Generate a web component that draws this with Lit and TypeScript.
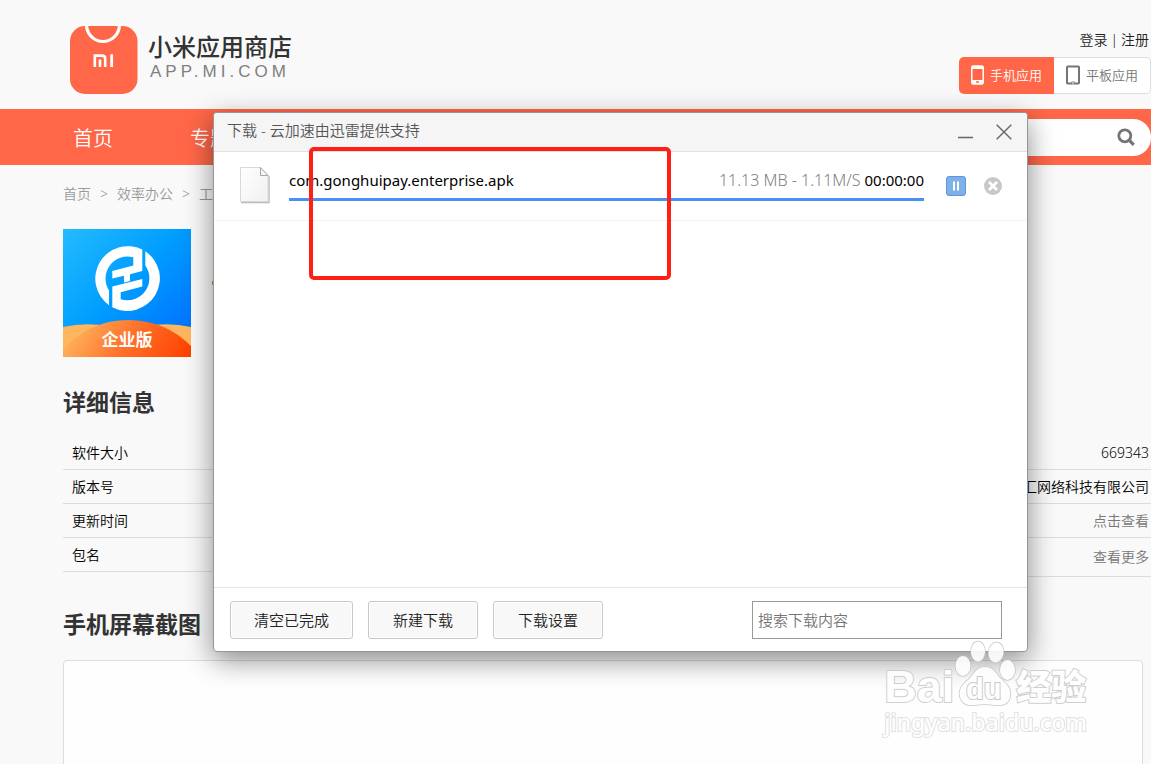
import { LitElement, html, css, svg } from "lit";
import { customElement, property } from "lit/decorators.js";

interface InfoRow {
  label: string;
  kind?: "link";
}

@customElement("store-header")
class StoreHeader extends LitElement {
  static styles = css`
    :host { display: block; }
    a { color: inherit; text-decoration: none; }
    .top {
      display: flex;
      justify-content: space-between;
      height: 109px;
      box-sizing: border-box;
      padding: 26px 0 0 70px;
    }
    .brand { display: flex; align-items: flex-start; gap: 10px; }
    .brand svg { display: block; }
    .names { display: flex; flex-direction: column; padding-top: 5px; }
    .name { font-size: 24px; line-height: 32px; font-weight: 500; color: #333; }
    .domain {
      font: 17px/18px "Liberation Sans", sans-serif;
      letter-spacing: 4px;
      color: #808080;
      padding-left: 2px;
    }
    .account {
      display: flex;
      flex-direction: column;
      align-items: flex-end;
      gap: 7px;
      padding-top: 4px;
    }
    .login { display: flex; gap: 3px; font-size: 14px; line-height: 20px; padding-right: 2px; color: #222; }
    .tabs { display: flex; }
    .tab {
      display: flex;
      align-items: center;
      gap: 6px;
      height: 37px;
      box-sizing: border-box;
      padding: 0 12px 2px;
      border: 1px solid #ddd;
      border-left: 0;
      border-radius: 0 5px 5px 0;
      background: #fff;
      color: #757575;
      font: inherit;
      font-size: 13px;
      line-height: 20px;
    }
    .tab.on {
      border: 0;
      border-radius: 5px 0 0 5px;
      background: #ff6748;
      color: #fff;
    }
    .nav {
      display: flex;
      align-items: center;
      justify-content: space-between;
      height: 56px;
      background: #ff6748;
    }
    .links { display: flex; gap: 77px; padding: 3px 0 0 73px; color: #fff; font-size: 20px; line-height: 30px; }
    .search {
      display: flex;
      align-items: center;
      width: 300px;
      height: 37px;
      border-radius: 18px;
      background: #fff;
    }
    .search input {
      flex: 1;
      min-width: 0;
      border: 0;
      outline: 0;
      padding: 0 18px;
      background: transparent;
      font: inherit;
      font-size: 14px;
    }
    .search button { display: flex; border: 0; padding: 0; margin-right: 16px; background: none; }
  `;

  render() {
    return html`
      <header class="top">
        <a class="brand" href="#">
          <svg width="68" height="68" viewBox="0 0 68 68" aria-hidden="true">
            <rect width="67.500" height="68" rx="15" fill="#ff6748" />
            <path d="M16.500 0C17.500 9 24.500 15.500 33 15.500S48.500 9 49.500 0" fill="none" stroke="#fff" stroke-width="3.200" />
            <path d="M24.800 41V29.600h7.200q3.200 0 3.200 3.200V41M30 33.500V41" fill="none" stroke="#fff" stroke-width="2.600" />
            <path d="M41.700 28.300V41" stroke="#fff" stroke-width="2.800" />
          </svg>
          <span class="names">
            <span class="name">小米应用商店</span>
            <span class="domain">APP.MI.COM</span>
          </span>
        </a>
        <div class="account">
          <div class="login"><a href="#">登录</a><span>|</span><a href="#">注册</a></div>
          <div class="tabs">
            <button class="tab on">
              <svg width="13" height="20" viewBox="0 0 13 20" aria-hidden="true">
                <rect x=".8" y="1" width="11.400" height="18" rx="1.500" fill="none" stroke="#fff" stroke-width="1.500" />
                <path d="M1 1h11v3H1zM1 15h11v4H1z" fill="#fff" />
                <path d="M5 17h3" stroke="#ff6748" stroke-width="1.500" />
              </svg>手机应用
            </button>
            <button class="tab">
              <svg width="14" height="20" viewBox="0 0 14 20" aria-hidden="true">
                <rect x="1" y="1.500" width="12" height="17" rx=".8" fill="none" stroke="#757575" stroke-width="2" />
                <path d="M5.500 17.500h3" stroke="#757575" stroke-width="2" />
                <path d="M6 18h2" stroke="#fff" stroke-width="1" />
              </svg>平板应用
            </button>
          </div>
        </div>
      </header>
      <nav class="nav">
        <div class="links"><a href="#">首页</a><a href="#">专题</a></div>
        <form class="search" role="search">
          <input type="search" aria-label="搜索应用" />
          <button type="button" aria-label="搜索">
            <svg width="18" height="18" viewBox="0 0 18 18" aria-hidden="true">
              <circle cx="7.800" cy="7.800" r="6" fill="none" stroke="#757575" stroke-width="2.800" />
              <path d="M12 12l4.800 4.800" stroke="#757575" stroke-width="3.200" />
            </svg>
          </button>
        </form>
      </nav>
    `;
  }
}

@customElement("info-list")
class InfoList extends LitElement {
  @property({ attribute: false }) rows: InfoRow[] = [];
  @property() align = "left";

  static styles = css`
    :host { display: block; flex: 1; }
    .list { margin: 0; padding: 0; list-style: none; }
    .row {
      padding: 7px 9px 6px;
      border-bottom: 1px solid #ddd;
      font-size: 14px;
      line-height: 20px;
      color: #000;
    }
    .right .row { padding: 7px 2px 6px; text-align: right; }
    .right .row:last-child { padding: 9px 2px; }
    a { color: #777; text-decoration: none; }
  `;

  render() {
    return html`<ul class="list ${this.align}">
      ${this.rows.map((r) => html`<li class="row">${r.kind === "link" ? html`<a href="#">${r.label}</a>` : r.label}</li>`)}
    </ul>`;
  }
}

@customElement("download-window")
class DownloadWindow extends LitElement {
  static styles = css`
    :host {
      display: flex;
      flex-direction: column;
      box-sizing: border-box;
      border: 1px solid #94979a;
      border-radius: 4px;
      background: #fff;
      box-shadow: 0 8px 28px rgba(0, 0, 0, 0.45);
      font-size: 15px;
      line-height: 22px;
      overflow: hidden;
    }
    .bar {
      display: flex;
      align-items: center;
      justify-content: space-between;
      height: 39px;
      box-sizing: border-box;
      padding: 0 15px 4px 13px;
      border-bottom: 1px solid #e0e0e0;
      background: #f5f5f5;
      color: #555;
    }
    .controls { display: flex; gap: 22px; padding-top: 4px; }
    .icon { display: flex; border: 0; padding: 0; background: none; }
    .body { flex: 1; }
    .item {
      display: flex;
      align-items: center;
      height: 68px;
      padding: 0 25px;
      border-bottom: 1px solid #f3f3f3;
    }
    .item > svg { margin-bottom: 2px; }
    .main { flex: 1; margin: 0 22px 2px 18px; border-bottom: 3px solid #4a90f3; padding-bottom: 7px; }
    .line { display: flex; justify-content: space-between; color: #000; font-weight: 400; }
    .line .size { color: #808080; font-size: 16px; font-weight: 350; }
    .actions { display: flex; align-items: center; gap: 18px; }
    .foot {
      display: flex;
      align-items: center;
      gap: 15px;
      height: 64px;
      box-sizing: border-box;
      padding: 0 25px 0 16px;
      border-top: 1px solid #e5e5e5;
    }
    .btn {
      height: 38px;
      min-width: 110px;
      padding: 0 23px;
      border: 1px solid #c8c8c8;
      border-radius: 3px;
      background: #f8f8f8;
      box-shadow: inset 0 0 0 1px #fff;
      font: inherit;
      color: #222;
    }
    .find {
      width: 250px;
      height: 38px;
      box-sizing: border-box;
      margin-left: auto;
      padding: 0 5px;
      border: 1px solid #999;
      background: #fff;
      font: inherit;
    }
    .find::placeholder { color: #757575; }
  `;

  render() {
    return html`
      <div class="bar">
        <span>下载 - 云加速由迅雷提供支持</span>
        <span class="controls">
          <button class="icon" aria-label="最小化">
            <svg width="17" height="16" viewBox="0 0 17 16"><path d="M1 13.500h15" stroke="#666" stroke-width="1.500" /></svg>
          </button>
          <button class="icon" aria-label="关闭">
            <svg width="16" height="16" viewBox="0 0 16 16"><path d="M.7.700l14.600 14.600M15.300.700L.700 15.300" stroke="#666" stroke-width="1.400" /></svg>
          </button>
        </span>
      </div>
      <div class="body">
        <div class="item">
          <svg width="32" height="38" viewBox="0 0 32 38" aria-hidden="true">
            <defs>
              <linearGradient id="sheet" x1="0" y1="0" x2="1" y2="1">
                <stop offset="0" stop-color="#fff" /><stop offset="1" stop-color="#f0f0f0" />
              </linearGradient>
            </defs>
            <path d="M2 36.500h28V10" fill="none" stroke="#bdbdbd" stroke-width="1.500" />
            <path d="M1.500 1.500h20l7.500 8V35.500h-27.500z" fill="url(#sheet)" stroke="#d8d8d8" />
            <path d="M21.500 1.500v8h7.500z" fill="#f4f4f4" stroke="#a8a8a8" />
          </svg>
          <div class="main">
            <div class="line">
              <span>com.gonghuipay.enterprise.apk</span>
              <span><span class="size">11.13 MB - 1.11M/S</span> 00:00:00</span>
            </div>
          </div>
          <span class="actions">
            <button class="icon" aria-label="暂停">
              <svg width="20" height="20" viewBox="0 0 20 20">
                <rect x=".5" y=".5" width="19" height="19" rx="2.500" fill="#7eb0ea" stroke="#5f96d8" />
                <path d="M8 5.500v9M12 5.500v9" stroke="#fff" stroke-width="2" />
              </svg>
            </button>
            <button class="icon" aria-label="取消">
              <svg width="18" height="18" viewBox="0 0 18 18">
                <circle cx="9" cy="9" r="9" fill="#c8c8c8" />
                <path d="M5 5l8 8M13 5l-8 8" stroke="#fff" stroke-width="2.800" />
              </svg>
            </button>
          </span>
        </div>
      </div>
      <div class="foot">
        <button class="btn">清空已完成</button>
        <button class="btn">新建下载</button>
        <button class="btn">下载设置</button>
        <input class="find" type="text" placeholder="搜索下载内容" aria-label="搜索下载内容" />
      </div>
    `;
  }
}

@customElement("baidu-mark")
class BaiduMark extends LitElement {
  static styles = css`
    :host {
      display: block;
      color: #fff;
      font-family: "Noto Sans", "Noto Sans CJK SC", sans-serif;
      -webkit-text-stroke: 2px #cacaca;
      paint-order: stroke fill;
      opacity: 0.9;
    }
    .brand { display: flex; align-items: flex-end; }
    .bai { font: bold 45px/46px "Liberation Sans", sans-serif; }
    .exp { font-size: 35px; line-height: 46px; font-weight: 900; }
    .site { font-size: 23px; line-height: 24px; font-weight: 500; -webkit-text-stroke: 2px #dedede; }
    svg { display: block; margin-bottom: 3px; }
    .du { font: bold 29px "Liberation Sans", sans-serif; -webkit-text-stroke: 0; }
  `;

  render() {
    return html`
      <div class="brand">
        <span class="bai">Bai</span>
        <svg width="62" height="67" viewBox="0 0 62 67">
          <g fill="#fff" stroke="#c0c0c0" stroke-width="1.500">
            <ellipse cx="9" cy="26" rx="7.500" ry="10" />
            <ellipse cx="24" cy="11.500" rx="7" ry="10" />
            <ellipse cx="42" cy="12.500" rx="7.500" ry="10" transform="rotate(8 42 12.500)" />
            <ellipse cx="53.500" cy="30" rx="7.500" ry="10" />
            <path d="M31 27c9 0 11 7 16 12 6 5 11 10 9 18-2 8-9 9-15 8-7-1-13-1-20 0-7 1-13-1-15-8-2-8 3-13 9-18 5-5 7-12 16-12z" />
          </g>
          <text class="du" x="12" y="59" fill="#fff" stroke="#c4c4c4" stroke-width="2">du</text>
        </svg>
        <span class="exp">经验</span>
      </div>
      <div class="site">jingyan.baidu.com</div>
    `;
  }
}

const logo = svg`
  <g fill="#fff">
    <path d="M79.300 20.600V42L67 45.200V52l-6 1.500V46.700L49.300 49.600V42L70.300 36.500V28.300A22 22 0 0 0 46 61.400V76.200A32.500 32.500 0 0 1 79.300 20.600z" />
    <path d="M82.300 22.300A32.500 32.500 0 0 1 49.300 78.200V57.600L79.300 50V57.600L57.700 63.300V70.300A22 22 0 0 0 82.300 36.600z" />
  </g>`;

@customElement("app-root")
class AppRoot extends LitElement {
  static styles = css`
    :host {
      display: block;
      position: relative;
      height: 100vh;
      overflow: hidden;
      background: #f9f9f9;
      font-family: "Noto Sans", "Noto Sans CJK SC", sans-serif;
      font-weight: 350;
      font-size: 14px;
      color: #222;
    }
    a { color: inherit; text-decoration: none; }
    .content { padding-left: 63px; }
    .crumbs { display: flex; gap: 9px; padding: 19px 0 25px; line-height: 20px; color: #999; }
    .app { display: flex; gap: 21px; }
    .app svg { display: block; }
    .stars { padding-top: 49px; }
    .title { margin: 0; font-size: 23px; line-height: 34px; font-weight: 700; color: #333; }
    .details { padding-top: 28px; }
    .columns { display: flex; padding: 17px 0 30px; }
    .shots {
      display: flex;
      margin: 19px 8px 0 0;
      height: 400px;
      border: 1px solid #ddd;
      border-radius: 4px;
      background: #fefefe;
    }
    .window { position: absolute; left: 213px; right: 123px; top: 112px; height: 540px; }
    .frame {
      position: absolute;
      left: 309px;
      top: 147px;
      width: 362px;
      height: 133px;
      box-sizing: border-box;
      border: 4px solid #ff1f14;
      border-radius: 5px;
    }
    .mark { position: absolute; right: 64px; top: 640px; }
  `;

  private left: InfoRow[] = [{ label: "软件大小" }, { label: "版本号" }, { label: "更新时间" }, { label: "包名" }];
  private right: InfoRow[] = [
    { label: "669343" },
    { label: "汇网络科技有限公司" },
    { label: "点击查看", kind: "link" },
    { label: "查看更多", kind: "link" },
  ];

  render() {
    return html`
      <store-header></store-header>
      <main class="content">
        <div class="crumbs">
          <a href="#">首页</a><span>&gt;</span><a href="#">效率办公</a><span>&gt;</span><a href="#">工具</a>
        </div>
        <div class="app">
          <svg width="128" height="128" viewBox="0 0 128 128" role="img">
            <defs>
              <linearGradient id="sky" x1="0" y1="0" x2="1" y2="1">
                <stop offset="0" stop-color="#24bbff" /><stop offset=".45" stop-color="#009eff" /><stop offset="1" stop-color="#0068ff" />
              </linearGradient>
              <linearGradient id="hill" x1="0" y1=".6" x2="1" y2=".8">
                <stop offset="0" stop-color="#ffb45c" /><stop offset=".5" stop-color="#ff6f28" /><stop offset="1" stop-color="#ff4200" />
              </linearGradient>
            </defs>
            <rect width="128" height="128" fill="url(#sky)" />
            <path d="M0 98q22-5 45-1h38q23-4 45 1v30H0z" fill="#ffb65e" />
            <path d="M0 120Q28 91 65 91t63 26v11H0z" fill="url(#hill)" />
            ${logo}
            <text x="64" y="117" text-anchor="middle" font-size="17" font-weight="700" fill="#fff">企业版</text>
          </svg>
          <svg class="stars" width="80" height="14" viewBox="0 0 80 14" aria-hidden="true">
            <path d="M0 3h12v4H0z" fill="#e08a1e" />
          </svg>
        </div>
        <section class="details">
          <h2 class="title">详细信息</h2>
          <div class="columns">
            <info-list .rows=${this.left}></info-list>
            <info-list .rows=${this.right} align="right"></info-list>
          </div>
        </section>
        <section>
          <h2 class="title">手机屏幕截图</h2>
          <div class="shots"></div>
        </section>
      </main>
      <download-window class="window"></download-window>
      <div class="frame"></div>
      <baidu-mark class="mark"></baidu-mark>
    `;
  }
}
